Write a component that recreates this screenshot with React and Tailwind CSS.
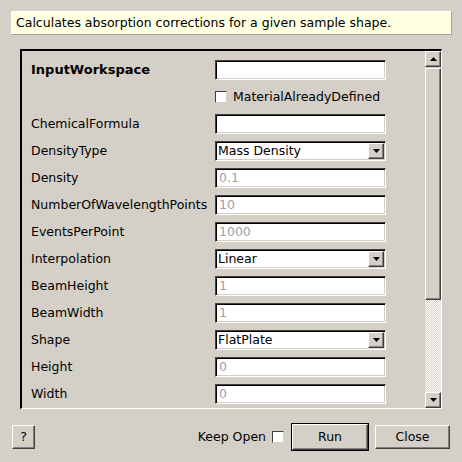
import React from 'react';

// Qt-ish algorithm dialog, motif/win95 sunken + raised bevels

const sunken = 'border-t border-l border-[#404040] border-r border-b border-r-white border-b-white shadow-[inset_1px_1px_0_#000,inset_-1px_-1px_0_#d4d0c8]';
const raised = 'border-t border-l border-white border-r border-b border-r-[#404040] border-b-[#404040] shadow-[inset_-1px_-1px_0_#808080]';

const Arrow = ({ up = false }) => (
  <svg width="7" height="4" viewBox="0 0 7 4" className="block">
    <path d={up ? 'M0 4 L3.5 0 L7 4 Z' : 'M0 0 L7 0 L3.5 4 Z'} fill="#000" />
  </svg>
);

const TextField = ({ value = '', disabled = false }) => (
  <div className={`w-[171px] h-[20px] bg-white flex items-center pl-[3px] ${sunken} ${disabled ? 'text-[#a0a0a0]' : 'text-black'}`}>
    {value}
  </div>
);

const Combo = ({ value }) => (
  <div className={`w-[171px] h-[20px] bg-white flex items-center pl-[2px] pr-[1px] ${sunken}`}>
    <span className="flex-1">{value}</span>
    <div className={`w-[16px] h-[16px] bg-[#d4d0c8] flex items-center justify-center ${raised}`}>
      <Arrow />
    </div>
  </div>
);

const CheckBox = ({ className = '' }) => (
  <div className={`w-[12px] h-[12px] bg-white border-t border-l border-[#404040] border-r border-b border-r-[#d4d0c8] border-b-[#d4d0c8] ${className}`} />
);

const Row = ({ label, bold, children }) => (
  <div className="flex items-center h-[20px]">
    <div className={`w-[184px] shrink-0 ${bold ? 'font-bold text-[13px]' : ''}`}>{label}</div>
    {children}
  </div>
);

const rows = [
  { label: 'ChemicalFormula', field: <TextField /> },
  { label: 'DensityType', field: <Combo value="Mass Density" /> },
  { label: 'Density', field: <TextField value="0.1" disabled /> },
  { label: 'NumberOfWavelengthPoints', field: <TextField value="10" disabled /> },
  { label: 'EventsPerPoint', field: <TextField value="1000" disabled /> },
  { label: 'Interpolation', field: <Combo value="Linear" /> },
  { label: 'BeamHeight', field: <TextField value="1" disabled /> },
  { label: 'BeamWidth', field: <TextField value="1" disabled /> },
  { label: 'Shape', field: <Combo value="FlatPlate" /> },
  { label: 'Height', field: <TextField value="0" disabled /> },
  { label: 'Width', field: <TextField value="0" disabled /> },
];

export default function App() {
  return (
    <div className="w-[462px] h-[462px] bg-[#d4d0c8] text-black text-[12.5px] font-['DejaVu_Sans','Liberation_Sans',sans-serif] flex flex-col overflow-hidden">
      {/* description */}
      <div className="mt-[11px] ml-[11px] w-[441px] h-[24px] bg-[#ffffe1] border-t border-l border-white border-r border-b border-r-[#a0a0a0] border-b-[#a0a0a0] flex items-center pl-[4px]">
        Calculates absorption corrections for a given sample shape.
      </div>

      {/* properties panel */}
      <div className="mt-[14px] ml-[20px] w-[422px] h-[360px] flex border-t-2 border-l-2 border-black border-r border-b border-r-white border-b-white overflow-hidden">
        <div className="flex-1 flex flex-col gap-[7px] pt-[9px] pl-[9px] overflow-hidden">
          <Row label="InputWorkspace" bold>
            <TextField />
          </Row>
          <Row label="">
            <div className="flex items-center gap-[6px]">
              <CheckBox />
              <span>MaterialAlreadyDefined</span>
            </div>
          </Row>
          {rows.map((r) => (
            <Row key={r.label} label={r.label}>
              {r.field}
            </Row>
          ))}
        </div>

        {/* scrollbar */}
        <div className="w-[16px] shrink-0 flex flex-col">
          <div className={`h-[16px] bg-[#d4d0c8] flex items-center justify-center ${raised}`}>
            <Arrow up />
          </div>
          <div className="h-[1px]" />
          <div className={`h-[232px] bg-[#d4d0c8] ${raised}`} />
          <div className="flex-1 bg-[repeating-conic-gradient(#ffffff_0_25%,#d4d0c8_0_50%)] bg-[length:2px_2px]" />
          <div className={`h-[16px] bg-[#d4d0c8] flex items-center justify-center ${raised}`}>
            <Arrow />
          </div>
        </div>
      </div>

      {/* buttons */}
      <div className="mt-[14px] h-[28px] flex items-center justify-between pl-[12px] pr-[12px]">
        <div className={`w-[23px] h-[24px] flex items-center justify-center ${raised}`}>?</div>
        <div className="flex items-center">
          <span>Keep Open</span>
          <CheckBox className="ml-[6px]" />
          <div className="ml-[7px] w-[78px] h-[28px] border border-black">
            <div className={`w-full h-full flex items-center justify-center ${raised}`}>Run</div>
          </div>
          <div className={`ml-[6px] w-[75px] h-[24px] flex items-center justify-center ${raised}`}>Close</div>
        </div>
      </div>
    </div>
  );
}
